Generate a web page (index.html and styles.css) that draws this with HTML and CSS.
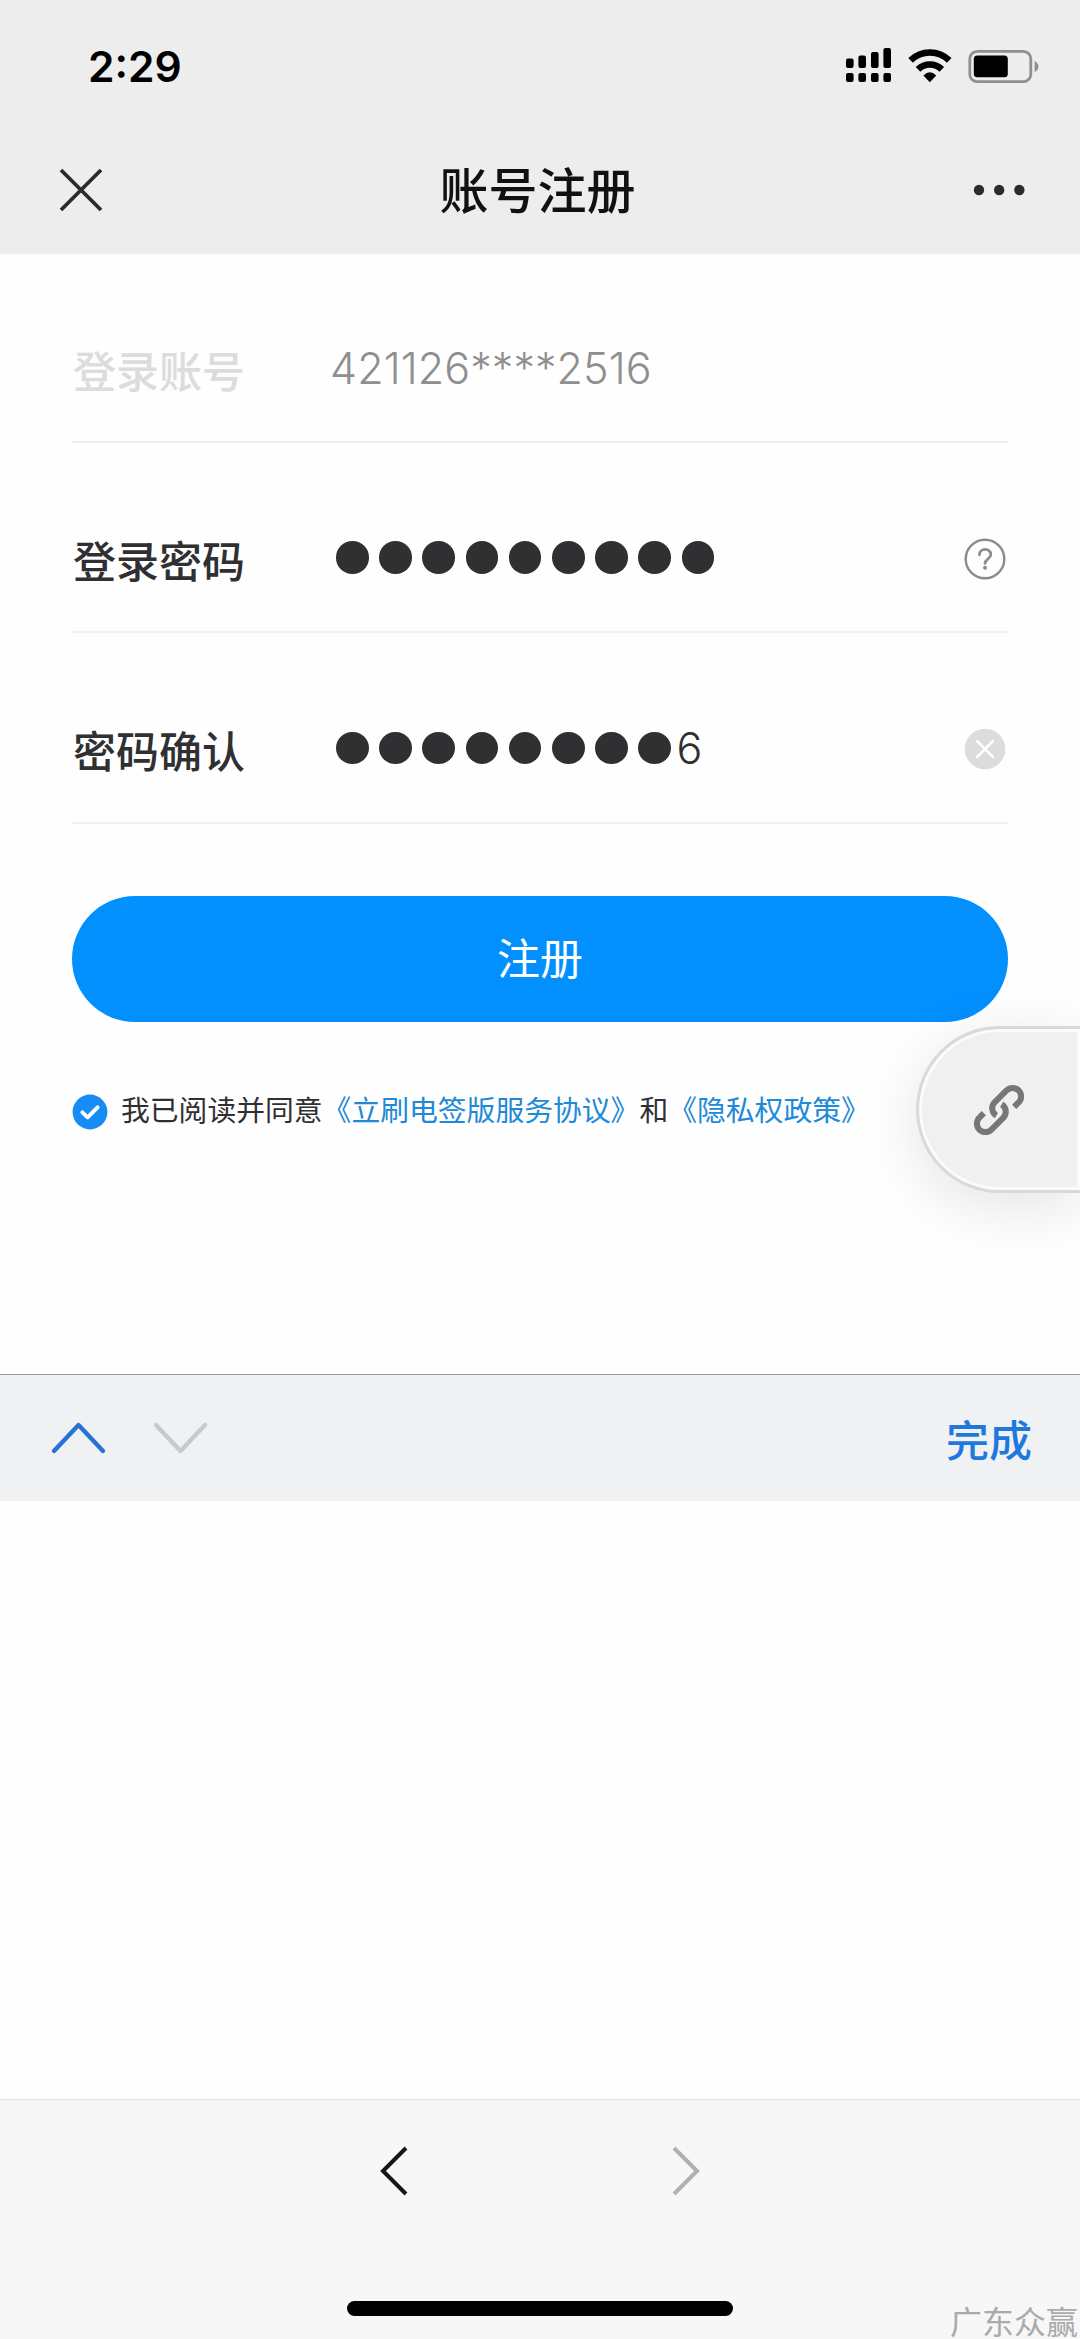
FILE: index.html
```html
<!DOCTYPE html>
<html lang="zh-CN">
<head>
<meta charset="UTF-8">
<meta name="viewport" content="width=device-width, initial-scale=1.0">
<title>账号注册</title>
<link rel="stylesheet" href="styles.css">
</head>
<body>
    <header class="header">
        <div class="status">
            <span class="time">2:29</span>
            <svg class="status-icons" width="194" height="36" viewBox="0 0 194 36">
                <g>
                    <rect x="0" y="10.5" width="7.6" height="9.5" rx="2"/>
                    <rect x="12.4" y="7.5" width="7.6" height="12.5" rx="2"/>
                    <rect x="25" y="4" width="7.6" height="16" rx="2"/>
                    <rect x="37.4" y="0" width="7.6" height="20" rx="2"/>
                    <rect x="0" y="25" width="7.6" height="9" rx="2"/>
                    <rect x="12.4" y="25" width="7.6" height="9" rx="2"/>
                    <rect x="25" y="25" width="7.6" height="9" rx="2"/>
                    <rect x="37.4" y="25" width="7.6" height="9" rx="2"/>
                </g>
                <g fill="none" stroke="#000" stroke-width="6.6">
                    <path d="M64.6 12.4a27.5 27.5 0 0 1 38.6 0"/>
                    <path d="M72 21.4a17 17 0 0 1 23.8 0"/>
                </g>
                <path d="M77.4 27.4q6.4-6.4 12.8 0l-6.4 6.8z"/>
                <rect x="123.8" y="3.3" width="61" height="30.4" rx="7.5" fill="none" stroke="#8f8f8f" stroke-width="2.8"/>
                <rect x="127.8" y="7.4" width="34" height="21.8" rx="3.5"/>
                <path d="M188.6 13q3.8 2 3.8 5.5t-3.8 5.5z" fill="#8f8f8f"/>
            </svg>
        </div>
        <nav class="nav">
            <svg width="44" height="44" viewBox="0 0 44 44"><path d="M2 2l40 40M42 2L2 42" stroke="#2b2b2b" stroke-width="3.8"/></svg>
            <h1>账号注册</h1>
            <svg width="52" height="12" viewBox="0 0 52 12" fill="#2b2b2b"><circle cx="6" cy="6" r="5.2"/><circle cx="26.2" cy="6" r="5.2"/><circle cx="46.4" cy="6" r="5.2"/></svg>
        </nav>
    </header>

    <main class="form">
        <div class="row disabled">
            <label>登录账号</label>
            <span class="value">421126****2516</span>
        </div>
        <div class="row">
            <label>登录密码</label>
            <div class="dots"><i></i><i></i><i></i><i></i><i></i><i></i><i></i><i></i><i></i></div>
            <svg class="icon" width="42" height="42" viewBox="0 0 42 42" fill="none" stroke="#8c8c8c">
                <circle cx="21" cy="21" r="19.3" stroke-width="2.4"/>
                <path d="M15.4 16.8c0-7.2 11.4-7.2 11.4-.4 0 4.6-5.8 4.8-5.8 9" stroke-width="2.8" stroke-linecap="round"/>
                <circle cx="21" cy="29.8" r="2" fill="#8c8c8c" stroke="none"/>
            </svg>
        </div>
        <div class="row">
            <label>密码确认</label>
            <div class="dots"><i></i><i></i><i></i><i></i><i></i><i></i><i></i><i></i><span>6</span></div>
            <svg class="icon" width="42" height="42" viewBox="0 0 42 42">
                <circle cx="21" cy="21" r="20.3" fill="#dcdcdc"/>
                <path d="M13.2 13.2l15.6 15.6M28.8 13.2L13.2 28.8" stroke="#fff" stroke-width="2.6" stroke-linecap="round"/>
            </svg>
        </div>
        <button class="submit">注册</button>
        <div class="agree">
            <svg width="36" height="36" viewBox="0 0 36 36">
                <circle cx="18" cy="18" r="17.4" fill="#168cf6"/>
                <path d="M10.4 18.4l5.2 5 10-10" fill="none" stroke="#fff" stroke-width="4" stroke-linecap="round" stroke-linejoin="round"/>
            </svg>
            <p>我已阅读并同意<a>《立刷电签版服务协议》</a>和<a>《隐私权政策》</a></p>
        </div>
    </main>

    <!-- floating link button, sticks to the right edge -->
    <div class="float">
        <svg width="54" height="54" viewBox="0 0 52 52">
            <g transform="translate(26 26) rotate(-45)" fill="none" stroke="#777" stroke-width="5.8">
                <path d="M12.5 8.2H18.5a8.2 8.2 0 0 0 0-16.4H2.2A8.2 8.2 0 0 0-5.6 2"/>
                <path d="M-12.5-8.2H-18.5a8.2 8.2 0 0 0 0 16.4H-2.2A8.2 8.2 0 0 0 5.6-2"/>
            </g>
        </svg>
    </div>

    <div class="keybar">
        <svg width="58" height="36" viewBox="0 0 58 36"><path d="M4 31L28.5 5 53 31" fill="none" stroke="#2673d5" stroke-width="4.4" stroke-linecap="round" stroke-linejoin="round"/></svg>
        <svg width="58" height="36" viewBox="0 0 58 36"><path d="M4 5l24.5 26L53 5" fill="none" stroke="#c7c9cb" stroke-width="4.4" stroke-linecap="round" stroke-linejoin="round"/></svg>
        <span>完成</span>
    </div>

    <footer class="footer">
        <div class="pager">
            <svg width="30" height="52" viewBox="0 0 30 52"><path d="M27 3L4 26l23 23" fill="none" stroke="#161616" stroke-width="4"/></svg>
            <svg width="30" height="52" viewBox="0 0 30 52"><path d="M3 3l23 23L3 49" fill="none" stroke="#b0b0b0" stroke-width="4"/></svg>
        </div>
        <div class="home"></div>
        <span class="mark">广东众赢</span>
    </footer>
</body>
</html>
```
FILE: styles.css
```css
* {
    box-sizing: border-box;
}
body {
    margin: 0;
    width: 1080px;
    height: 2339px;
    position: relative;
    overflow: hidden;
    display: flex;
    flex-direction: column;
    font-family: Inter, "Noto Sans CJK SC", sans-serif;
    background-color: #fefefe;
    color: #303032;
}
svg {
    display: block;
    flex: none;
}
.header {
    height: 254px;
    background-color: #ededed;
}
.status {
    height: 126px;
    padding: 6px 40px 0 88px;
    display: flex;
    align-items: center;
    justify-content: space-between;
}
.time {
    font-size: 42.5px;
    font-weight: 600;
    color: #000;
}
.nav {
    height: 128px;
    padding: 0 55px 0 59px;
    display: flex;
    align-items: center;
    justify-content: space-between;
}
.nav h1 {
    margin: 0;
    padding: 0 1px 6px 0;
    font-family: "Noto Sans CJK SC", sans-serif;
    font-size: 49px;
    font-weight: 500;
    color: #111;
}
.form {
    height: 1120px;
    padding: 0 72px;
}
.row {
    height: 189px;
    padding-top: 42px;
    border-bottom: 2px solid #f0f0f0;
    display: flex;
    align-items: center;
}
.row + .row {
    height: 190.3px;
    padding-top: 44px;
}
.row label {
    width: 258px;
    padding-left: 1px;
    font-size: 43px;
    font-weight: 500;
}
.disabled label {
    color: #dcdcdc;
}
.value {
    margin-bottom: 2px;
    font-size: 43px;
    font-weight: 300;
    letter-spacing: 0.1px;
    color: #8f8f8f;
}
.dots {
    display: flex;
    align-items: center;
    gap: 10.6px;
    height: 44px;
    padding-left: 6px;
    margin-bottom: 3px;
}
.dots i {
    width: 32.6px;
    height: 32.6px;
    border-radius: 50%;
    background-color: #303032;
}
.dots span {
    margin-left: -5px;
    font-size: 43px;
    font-weight: 300;
}
.icon {
    margin-left: auto;
    margin-right: 2px;
}
.submit {
    display: block;
    width: 100%;
    height: 126px;
    margin-top: 72.4px;
    padding: 0 0 6px;
    border: none;
    border-radius: 63px;
    background-color: #0290ff;
    color: #fff;
    font-family: "Noto Sans CJK SC", sans-serif;
    font-size: 43px;
}
.agree {
    margin-top: 69px;
    display: flex;
    align-items: center;
    gap: 13px;
    height: 42px;
}
.agree p {
    margin: 0;
    padding-bottom: 6px;
    font-family: "Noto Sans CJK SC", sans-serif;
    font-size: 28.8px;
    white-space: nowrap;
}
.agree a {
    color: #2089d8;
}
.float {
    position: absolute;
    top: 1026px;
    right: 0;
    width: 164px;
    height: 167px;
    padding-left: 53px;
    display: flex;
    align-items: center;
    border: 3px solid #d9d9d9;
    border-right: none;
    border-radius: 84px 0 0 84px;
    background-color: #f0f0f0;
    box-shadow: inset 0 0 0 3px #fbfbfb, 0 14px 60px rgba(0, 0, 0, 0.1);
}
.keybar {
    height: 127px;
    padding: 0 48px 0 50px;
    display: flex;
    align-items: center;
    gap: 44px;
    border-top: 1px solid #999;
    background-color: #eff1f3;
}
.keybar svg {
    margin-bottom: 1px;
}
.keybar span {
    margin-left: auto;
    font-size: 43px;
    font-weight: 500;
    color: #1f78dc;
}
.footer {
    position: relative;
    height: 240px;
    margin-top: auto;
    border-top: 1px solid #e2e2e2;
    background-color: #f7f7f7;
}
.pager {
    height: 142px;
    display: flex;
    align-items: center;
    justify-content: center;
    gap: 262px;
}
.home {
    width: 386px;
    height: 15px;
    margin: 59px auto 0;
    border-radius: 8px;
    background-color: #000;
}
/* watermark */
.mark {
    position: absolute;
    right: 2px;
    bottom: 0;
    font-size: 32px;
    line-height: 32px;
    color: #aaa;
}
```
